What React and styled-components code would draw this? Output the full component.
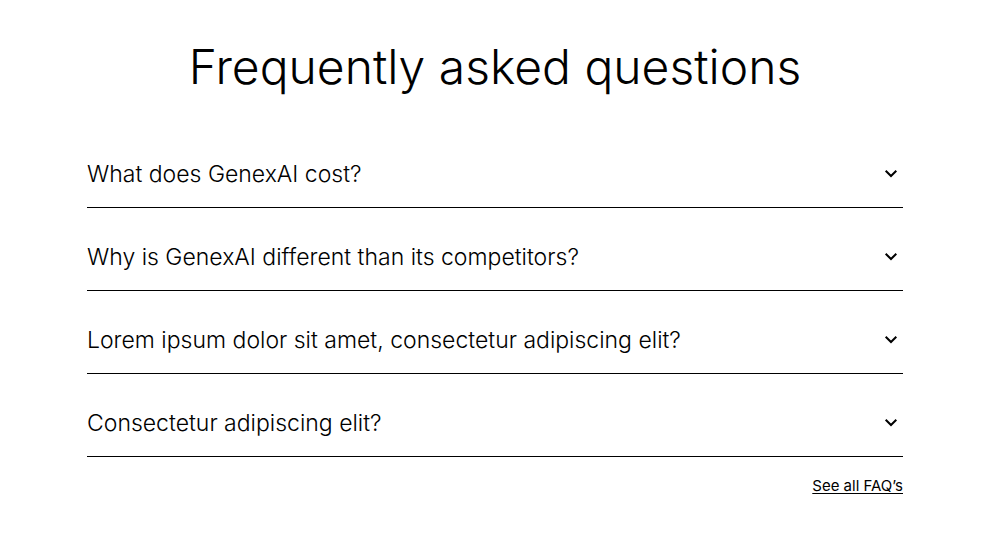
import React, { useState } from "react";
import styled, { createGlobalStyle } from "styled-components";

const GlobalStyle = createGlobalStyle`
  body { margin: 0; background: #fff; color: #000; font-family: Inter, sans-serif; }
`;
const Section = styled.section`
  box-sizing: border-box;
  max-width: 1000px;
  margin: 0 auto;
  padding: 35px 90px 48px 87px;
`;
const Title = styled.h2`
  margin: 0 0 42px;
  font-size: 48px;
  line-height: 64px;
  font-weight: 300;
  text-align: center;
`;
const List = styled.div`
  display: flex;
  flex-direction: column;
  gap: 16px;
`;
const Item = styled.div`
  border-bottom: 1px solid #000;
`;
const Question = styled.button`
  display: flex;
  align-items: center;
  justify-content: space-between;
  width: 100%;
  min-height: 66px;
  padding: 0 5px 0 0;
  border: 0;
  background: none;
  color: inherit;
  font: 300 23px/32px Inter, sans-serif;
  text-align: left;
  cursor: pointer;
`;
const Answer = styled.p`
  margin: 0 0 20px;
  font-size: 15px;
  line-height: 24px;
`;
const Footer = styled.div`
  display: flex;
  justify-content: flex-end;
  padding-top: 19px;
`;
const More = styled.a`
  color: inherit;
  font-size: 15px;
  line-height: 20px;
  text-underline-offset: 2px;
`;
const Chevron = styled.svg`
  flex: none;
  width: 14px;
  height: 14px;
`;

const faqs = [
  "What does GenexAI cost?",
  "Why is GenexAI different than its competitors?",
  "Lorem ipsum dolor sit amet, consectetur adipiscing elit?",
  "Consectetur adipiscing elit?",
];

export default function App() {
  const [open, setOpen] = useState(-1);
  return (
    <>
      <GlobalStyle />
      <Section>
        <Title>Frequently asked questions</Title>
        <List>
          {faqs.map((q, i) => (
            <Item key={q}>
              <Question type="button" aria-expanded={open === i} onClick={() => setOpen(open === i ? -1 : i)}>
                {q}
                <Chevron viewBox="0 0 14 14" fill="none" stroke="currentColor" strokeWidth="2" aria-hidden="true">
                  <path d="M1.7 3.7L7 9l5.3-5.3" />
                </Chevron>
              </Question>
              {open === i && <Answer>Lorem ipsum dolor sit amet, consectetur adipiscing elit.</Answer>}
            </Item>
          ))}
        </List>
        <Footer><More href="#faqs">See all FAQ’s</More></Footer>
      </Section>
    </>
  );
}
